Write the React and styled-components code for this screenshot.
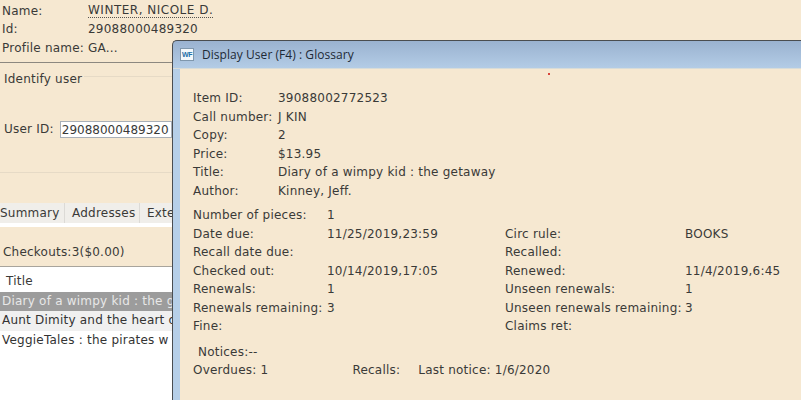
import styled, { createGlobalStyle } from "styled-components";

const GlobalStyle = createGlobalStyle`
	html, body {
		margin: 0;
		padding: 0;
		background: #f6e8d1;
	}
	body {
		font-family: "DejaVu Sans", sans-serif;
		font-size: 12px;
		letter-spacing: 0.22px;
		color: #3a3a38;
		overflow: hidden;
	}
`;

const itemRows = [
	["Item ID:", "39088002772523"],
	["Call number:", "J KIN"],
	["Copy:", "2"],
	["Price:", "$13.95"],
	["Title:", "Diary of a wimpy kid : the getaway"],
	["Author:", "Kinney, Jeff."],
];

const circRows = [
	["Number of pieces:", "1"],
	["Date due:", "11/25/2019,23:59", "Circ rule:", "BOOKS"],
	["Recall date due:", "", "Recalled:", ""],
	["Checked out:", "10/14/2019,17:05", "Renewed:", "11/4/2019,6:45"],
	["Renewals:", "1", "Unseen renewals:", "1"],
	["Renewals remaining:", "3", "Unseen renewals remaining:", "3"],
	["Fine:", "", "Claims ret:", ""],
];

// only what shows beside the dialog
const checkouts = [
	"Diary of a wimpy kid : the g",
	"Aunt Dimity and the heart o",
	"VeggieTales : the pirates w",
];

const App = () => {
	return (
		<>
			<GlobalStyle />
			<Page>
				<UserHeader>
					<HeaderRow>
						<HeaderLabel>Name:</HeaderLabel>
						<UserName>WINTER, NICOLE D.</UserName>
					</HeaderRow>
					<HeaderRow>
						<HeaderLabel>Id:</HeaderLabel>
						<span>29088000489320</span>
					</HeaderRow>
					<HeaderRow>
						<HeaderLabel>Profile name:</HeaderLabel>
						<span>GA...</span>
					</HeaderRow>
				</UserHeader>

				<LowerPane>
					<IdentifyGroup>
						<GroupTitle>Identify user</GroupTitle>
						<UserIdRow>
							<span>User ID:</span>
							<UserIdInput>29088000489320</UserIdInput>
						</UserIdRow>
					</IdentifyGroup>

					<Tabs>
						<Tab $width={65}>Summary</Tab>
						<Tab $width={75} $pad={7}>Addresses</Tab>
						<Tab $width={33} $pad={7}>Exte</Tab>
					</Tabs>

					<CheckoutCount>Checkouts:3($0.00)</CheckoutCount>

					<CheckoutList>
						<ListHead>Title</ListHead>
						{checkouts.map((title, i) => (
							<ListRow key={title} $index={i}>
								{title}
							</ListRow>
						))}
					</CheckoutList>
				</LowerPane>
			</Page>

			<Dialog>
				<TitleBar>
					<AppIcon>WF</AppIcon>
					<TitleText>Display User (F4) : Glossary</TitleText>
				</TitleBar>
				<DialogBody>
					<Dot />
					<ItemBlock>
						{itemRows.map(([label, value]) => (
							<ItemRow key={label}>
								<span>{label}</span>
								<span>{value}</span>
							</ItemRow>
						))}
					</ItemBlock>
					<CircBlock>
						{circRows.map(([a, b, c, d]) => (
							<CircRow key={a}>
								<span>{a}</span>
								<span>{b}</span>
								<span>{c}</span>
								<span>{d}</span>
							</CircRow>
						))}
					</CircBlock>
					<Notices>Notices:--</Notices>
					<OverdueRow>
						<span>Overdues: 1</span>
						<Recalls>Recalls:</Recalls>
						<span>Last notice: 1/6/2020</span>
					</OverdueRow>
				</DialogBody>
			</Dialog>
		</>
	);
};

export default App;

const Page = styled.div`
	width: 801px;
	height: 400px;
	overflow: hidden;
	white-space: nowrap;
`;

const UserHeader = styled.div`
	height: 60px;
	padding: 2px 0 0 2px;
	border-bottom: 1px solid #8c8880;
`;

const HeaderRow = styled.div`
	display: flex;
	height: 18.4px;
	line-height: 18px;
`;

const HeaderLabel = styled.span`
	width: 86px;
	flex-shrink: 0;
`;

const UserName = styled.span`
	border-bottom: 1px dotted #55534f;
	height: 15px;
	line-height: 17px;
	letter-spacing: 0.5px;
`;

const LowerPane = styled.div`
	width: 173px;
	overflow: hidden;
`;

const IdentifyGroup = styled.div`
	height: 109px;
	border-bottom: 1px solid #e6dac6;
	padding-left: 4px;
`;

const GroupTitle = styled.div`
	position: relative;
	height: 48px;
	padding-top: 9px;
	line-height: 15px;
	&::after {
		content: "";
		position: absolute;
		left: 80px;
		right: 0;
		top: 13px;
		border-top: 1px solid #e6dac6;
	}
`;

const UserIdRow = styled.div`
	display: flex;
	align-items: center;
	gap: 6px;
	height: 18px;
`;

const UserIdInput = styled.div`
	width: 112px;
	height: 17px;
	flex-shrink: 0;
	line-height: 16px;
	letter-spacing: 0;
	box-sizing: border-box;
	border: 1px solid #a9b0b8;
	background: #fff;
	padding-left: 1px;
`;

const Tabs = styled.div`
	display: flex;
	height: 20px;
	margin-top: 30px;
	background: #f0eeea;
	border-bottom: 4px solid #fff;
`;

const Tab = styled.div`
	width: ${(p) => p.$width}px;
	flex-shrink: 0;
	box-sizing: border-box;
	padding-left: ${(p) => p.$pad || 0}px;
	line-height: 20px;
	border-right: 1px solid #dcdad6;
	&:last-child {
		border-right: none;
	}
`;

const CheckoutCount = styled.div`
	height: 22px;
	padding: 17px 0 0 3px;
	line-height: 16px;
	border-bottom: 1px solid #a8a49c;
`;

const CheckoutList = styled.div`
	background: #fff;
	height: 134px;
`;

const ListHead = styled.div`
	height: 25px;
	padding-left: 6px;
	line-height: 28px;
`;

const ListRow = styled.div`
	height: ${(p) => (p.$index === 0 ? "19px" : "20px")};
	padding-left: 2px;
	line-height: 19px;
	color: ${(p) => (p.$index === 0 ? "#e8e8e8" : "#333")};
	background: ${(p) => (p.$index === 0 ? "#9c9c9c" : p.$index === 1 ? "#f0f0f0" : "#fff")};
`;

const Dialog = styled.div`
	position: absolute;
	left: 172px;
	top: 40px;
	width: 629px;
	height: 360px;
	box-sizing: border-box;
	display: flex;
	flex-direction: column;
	border: 1px solid #4a4d50;
	border-right: none;
	border-bottom: none;
	border-top-left-radius: 5px;
	background: linear-gradient(#9ab2d0, #b6cfe8 30px);
	overflow: hidden;
	white-space: nowrap;
`;

const TitleBar = styled.div`
	display: flex;
	align-items: center;
	height: 28px;
	flex-shrink: 0;
	padding-left: 7px;
	gap: 8px;
	border-bottom: 1px solid #d8dcd8;
	box-sizing: border-box;
`;

const AppIcon = styled.div`
	width: 14px;
	height: 13px;
	background: #f4f8fb;
	border: 1px solid #7f97ad;
	box-sizing: border-box;
	color: #1f6fa8;
	font: bold 7px/11px "Liberation Sans", sans-serif;
	letter-spacing: -0.5px;
	text-align: center;
`;

const TitleText = styled.div`
	font-family: "Open Sans", sans-serif;
	font-size: 12px;
	letter-spacing: 0.05px;
	color: #1e2a36;
`;

const DialogBody = styled.div`
	position: relative;
	flex: 1;
	margin-left: 7px;
	background: #f6e8d1;
	padding: 20px 0 0 13px;
`;

const Dot = styled.i`
	position: absolute;
	left: 368px;
	top: 4px;
	width: 2px;
	height: 2px;
	background: #d8443a;
`;

const ItemBlock = styled.div`
	display: flex;
	flex-direction: column;
`;

const ItemRow = styled.div`
	display: grid;
	grid-template-columns: 85px 1fr;
	height: 18.5px;
	line-height: 18px;
`;

const CircBlock = styled.div`
	margin-top: 6.4px;
`;

const CircRow = styled.div`
	display: grid;
	grid-template-columns: 134px 178px 180px 1fr;
	height: 18.5px;
	line-height: 18px;
`;

const Notices = styled.div`
	margin: 7px 0 0 5px;
	height: 18px;
	line-height: 18px;
`;

const OverdueRow = styled.div`
	display: flex;
	height: 18px;
	line-height: 18px;
`;

const Recalls = styled.span`
	margin: 0 18px 0 84px;
`;
